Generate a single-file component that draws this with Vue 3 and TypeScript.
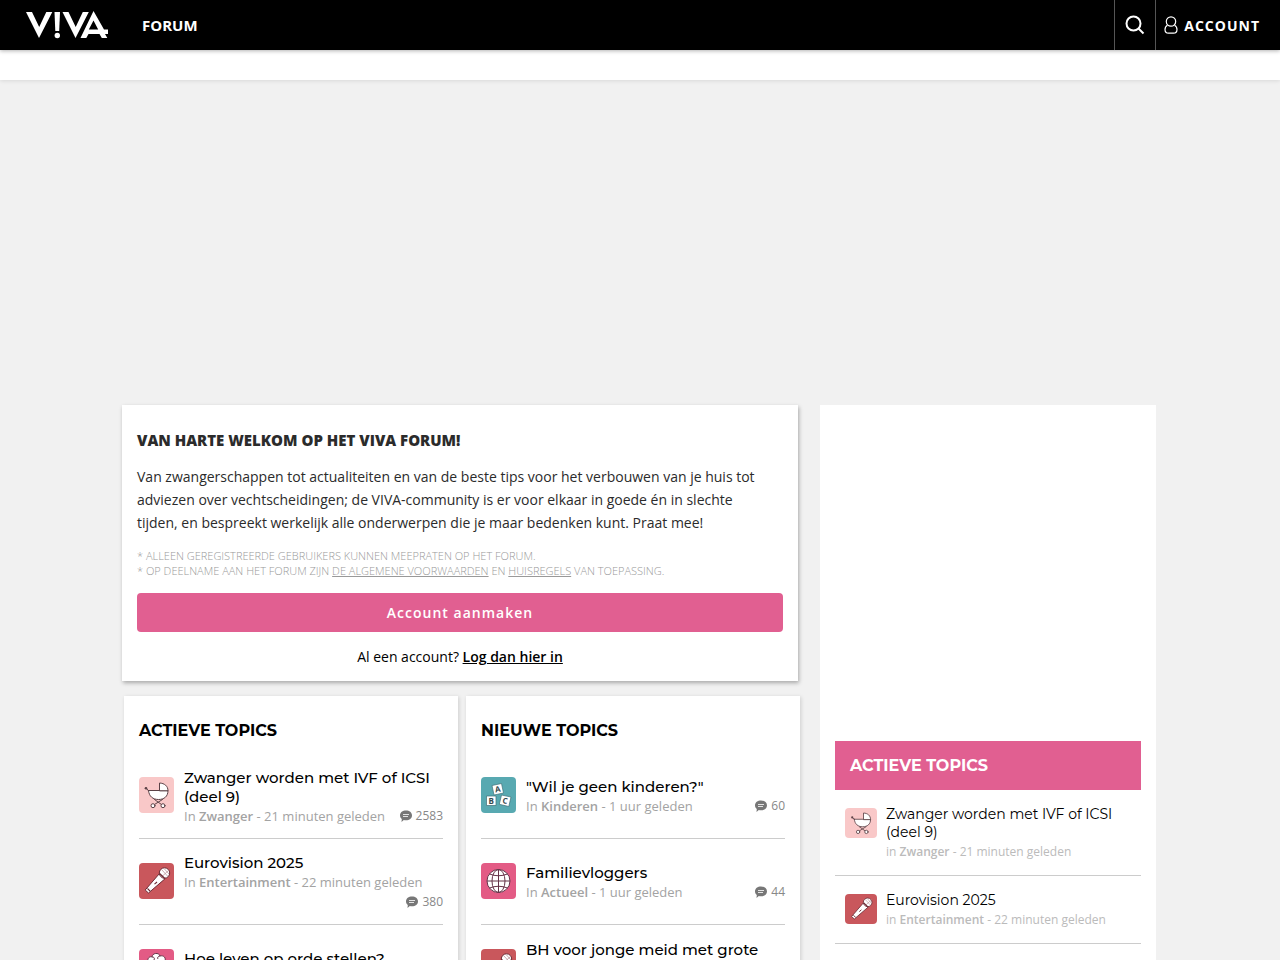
<script setup lang="ts">
import { defineComponent, h } from 'vue'

type IconName = 'pram' | 'mic' | 'blocks' | 'globe' | 'brain'

interface Topic {
  title: string
  forum: string
  time: string
  icon: IconName
  replies?: number
}

const artwork: Record<IconName, string> = {
  pram: `<g stroke="#5b4247" stroke-width="1" stroke-linecap="round" stroke-linejoin="round" fill="#fff"><path d="M9.500 13.500H29c0 6-3.900 9-9.500 9s-9.500-3-10-9z"/><path d="M20.500 13.500V6c5 .3 8.500 3 8.500 7.500z"/><path d="M9.500 13.500 7 11.300" fill="none"/><path d="m15.500 22.500 7 5m1-5-8 5" fill="none"/><circle cx="14" cy="28.700" r="2"/><circle cx="24" cy="28.700" r="2"/></g><circle cx="7" cy="11.300" r="1.300" fill="#5b4247"/>`,
  mic: `<g stroke="#6e2c36" stroke-width="1" stroke-linejoin="round"><path d="m20.500 10.500 5.500 5.300L9.500 30l-3.300-3z" fill="#fff"/><circle cx="25.500" cy="10" r="5.200" fill="#fff"/><path d="m22.500 6.500 6 6.500m-3.500-7.500 5 5.500M23 13.500l6.500-6" fill="none" stroke="#b58a91" stroke-width=".7"/><path d="m20.500 10.500 5.500 5.300" fill="none" stroke-width="1.500"/><path d="m8.500 25.500 2.600 2.600m4.400-7 2.500-2.100" fill="none" stroke-width="1.200"/></g>`,
  blocks: `<g fill="#fff" stroke="#3d7078" stroke-width=".7"><path d="m11 8.500 9.500-2 2 9.500-9.500 2z"/><path d="M5.500 19H15v9.500H5.500z"/><path d="m20.500 18 9.500 2-2.200 9.500-9.500-2.200z"/></g><g fill="#35484d" font-family="Open Sans, sans-serif" font-weight="700" font-size="8" text-anchor="middle"><text x="16.700" y="15" transform="rotate(-10 16.700 12)">A</text><text x="10.300" y="26.600">B</text><text x="24" y="26.600" transform="rotate(12 24 24)">C</text></g>`,
  globe: `<g fill="none" stroke="#653449" stroke-width="1"><circle cx="17.500" cy="18" r="11.500" fill="#fff"/><ellipse cx="17.500" cy="18" rx="6.500" ry="11.500"/><path d="M17.500 6.500v23M6 18h23M8.500 11q9 3.500 18 0M8.500 25q9-3.500 18 0"/></g>`,
  brain: `<path d="M7 21c-3-2-2-8 2-8-1-4 2-6 4-5 0-4 7-5 8-1 4-1 6 2 5 5 4 0 6 5 3 8 1 5-3 9-7 8-3 4-8 3-9 0-4 1-7-3-6-7z" fill="#fff" stroke="#653449"/><path d="M9 13c1-2 4-1 4 1m0-6c2 0 3 1 2 3m6-4c-2 0-3 2-2 3m7 2c-2-1-4 0-4 2m-11 4c2-3 5-1 5 1m4-2c3-1 5 1 4 3" fill="none" stroke="#653449"/>`,
}

const TopicIcon = defineComponent({
  props: { name: { type: String, required: true } },
  setup(props) {
    return () =>
      h('svg', {
        class: 'art',
        viewBox: '0 0 35 36',
        width: '100%',
        height: '100%',
        'aria-hidden': 'true',
        innerHTML: artwork[props.name as IconName],
      })
  },
})

const pram: Topic = { title: 'Zwanger worden met IVF of ICSI (deel 9)', forum: 'Zwanger', time: '21 minuten geleden', icon: 'pram', replies: 2583 }
const song: Topic = { title: 'Eurovision 2025', forum: 'Entertainment', time: '22 minuten geleden', icon: 'mic', replies: 380 }

const panels: { heading: string; topics: Topic[] }[] = [
  {
    heading: 'Actieve topics',
    topics: [pram, song, { title: 'Hoe leven op orde stellen?', forum: 'Psyche', time: '23 minuten geleden', icon: 'brain', replies: 12 }],
  },
  {
    heading: 'Nieuwe topics',
    topics: [
      { title: '"Wil je geen kinderen?"', forum: 'Kinderen', time: '1 uur geleden', icon: 'blocks', replies: 60 },
      { title: 'Familievloggers', forum: 'Actueel', time: '1 uur geleden', icon: 'globe', replies: 44 },
      { title: 'BH voor jonge meid met grote borsten', forum: 'Mode', time: '2 uur geleden', icon: 'mic', replies: 8 },
    ],
  },
]
const sidebarTopics: Topic[] = [pram, song]
</script>

<template>
  <div class="page">
    <header class="topbar">
      <a class="logo" href="#" aria-label="Viva">
        <svg viewBox="0 0 82 28" width="82" height="28" fill="#fff" aria-hidden="true">
          <path d="M0 1h6l7.200 15L20.300 1h6L13 27z" />
          <path d="M28.500 1h5.500l-.8 19h-3.900z" />
          <circle cx="31.300" cy="24.500" r="2.700" />
          <path d="M36.500 1h6l7.200 15L56.800 1h6L49.500 27z" />
          <path fill-rule="evenodd" d="M67.500 0 78 18.500h4V23h-3l2.300 4h-5.500l-2.300-4H62.500l-2.200 4H54.500zM67.500 9.500l-4.700 9h9.400z" />
        </svg>
      </a>
      <nav class="nav"><a href="#">FORUM</a></nav>
      <button class="search" type="button" aria-label="Zoeken">
        <svg viewBox="0 0 20 20" width="20" height="20" fill="none" stroke="#fff" stroke-width="2" aria-hidden="true">
          <circle cx="8.500" cy="8.500" r="7" />
          <path d="m13.500 13.500 5 5" />
        </svg>
      </button>
      <a class="account" href="#">
        <svg viewBox="0 0 14 18" width="14" height="18" fill="none" stroke="#fff" stroke-width="1.200" aria-hidden="true">
          <circle cx="7" cy="5.500" r="4.700" />
          <path d="M3.500 9.200C1.800 10 1 11.500 1 13.500c0 2.500 1.200 3.700 3.500 3.700h5c2.300 0 3.500-1.200 3.500-3.700 0-2-.8-3.500-2.500-4.300" />
        </svg>
        <span>ACCOUNT</span>
      </a>
    </header>
    <div class="subbar"></div>

    <div class="layout">
      <main class="main">
        <section class="welcome">
          <h1>VAN HARTE WELKOM OP HET VIVA FORUM!</h1>
          <p class="intro">
            Van zwangerschappen tot actualiteiten en van de beste tips voor het verbouwen van je huis tot adviezen over
            vechtscheidingen; de VIVA-community is er voor elkaar in goede én in slechte tijden, en bespreekt werkelijk
            alle onderwerpen die je maar bedenken kunt. Praat mee!
          </p>
          <p class="note">
            * ALLEEN GEREGISTREERDE GEBRUIKERS KUNNEN MEEPRATEN OP HET FORUM.<br />
            * OP DEELNAME AAN HET FORUM ZIJN <a href="#">DE ALGEMENE VOORWAARDEN</a> EN <a href="#">HUISREGELS</a> VAN
            TOEPASSING.
          </p>
          <button class="signup" type="button">Account aanmaken</button>
          <p class="login">Al een account? <a href="#">Log dan hier in</a></p>
        </section>

        <div class="panels">
          <section v-for="panel in panels" :key="panel.heading" class="panel">
            <h2>{{ panel.heading }}</h2>
            <ul>
              <li v-for="topic in panel.topics" :key="topic.title" class="topic">
                <span class="tile" :class="topic.icon"><TopicIcon :name="topic.icon" /></span>
                <div class="body">
                  <a class="title" href="#">{{ topic.title }}</a>
                  <div class="meta">
                    <span>In <b>{{ topic.forum }}</b> - {{ topic.time }}</span>
                    <span class="count">
                      <svg viewBox="0 0 12 12" width="12" height="12" aria-hidden="true">
                        <path d="M6 0.500c3.400 0 6 2 6 4.900s-2.600 4.900-6 4.900c-.8 0-1.500-.1-2.200-.3L1.500 12l.3-3C.7 8.100 0 6.900 0 5.400 0 2.500 2.600.5 6 .5z" fill="#777" />
                        <path d="M3 4.500h6M3 6.500h5" stroke="#fff" stroke-width=".8" />
                      </svg>
                      {{ topic.replies }}
                    </span>
                  </div>
                </div>
              </li>
            </ul>
          </section>
        </div>
      </main>

      <aside class="sidebar">
        <div class="slot"></div>
        <h2>Actieve topics</h2>
        <ul>
          <li v-for="topic in sidebarTopics" :key="topic.title" class="side-topic">
            <span class="tile small" :class="topic.icon"><TopicIcon :name="topic.icon" /></span>
            <div class="body">
              <a class="title" href="#">{{ topic.title }}</a>
              <div class="meta"><span>in <b>{{ topic.forum }}</b> - {{ topic.time }}</span></div>
            </div>
          </li>
        </ul>
      </aside>
    </div>
  </div>
</template>

<style>
body {
  margin: 0;
  background: #f1f1f1;
}
</style>

<style scoped>
.page {
  display: flex;
  flex-direction: column;
  min-height: 100vh;
  font-family: 'Open Sans', sans-serif;
  color: #000;
}
a {
  color: inherit;
}
h1,
h2,
p,
ul {
  margin: 0;
  padding: 0;
}
ul {
  list-style: none;
}
svg {
  display: block;
}
.topbar {
  position: relative;
  z-index: 1;
  flex: none;
  display: flex;
  align-items: center;
  height: 50px;
  background: #000;
  color: #fff;
  box-shadow: 0 1px 4px rgba(0, 0, 0, 0.3);
}
.logo {
  margin-left: 26px;
}
.nav {
  flex: 1;
  margin-left: 34px;
  font-size: 15px;
  font-weight: 700;
}
.nav a,
.account {
  text-decoration: none;
}
.search {
  display: flex;
  align-items: center;
  justify-content: center;
  width: 42px;
  height: 50px;
  padding: 0;
  background: none;
  border: solid #555;
  border-width: 0 1px;
}
.account {
  display: flex;
  align-items: center;
  gap: 6px;
  padding: 0 20px 0 8px;
  font-size: 14px;
  font-weight: 700;
  letter-spacing: 1px;
}
.subbar {
  flex: none;
  height: 30px;
  background: #fff;
  box-shadow: 0 1px 4px rgba(0, 0, 0, 0.1);
}
.layout {
  flex: 1;
  display: grid;
  grid-template-columns: minmax(0, 1fr) 336px;
  gap: 20px;
  width: 100%;
  max-width: 1036px;
  margin: 325px auto 0;
  padding-right: 2px;
  box-sizing: border-box;
}
.welcome {
  margin-right: 2px;
  padding: 24px 15px 14px;
  background: #fff;
  box-shadow: 1px 2px 4px rgba(0, 0, 0, 0.3);
}
.welcome h1 {
  font-size: 15px;
  line-height: 22px;
  font-weight: 800;
  color: #2b2b2b;
}
.intro {
  margin-top: 14px;
  padding-right: 10px;
  font-size: 14px;
  line-height: 23px;
  color: #2b2b2b;
}
.note {
  margin-top: 14px;
  font-size: 11px;
  line-height: 15px;
  font-weight: 300;
  color: #999;
}
.signup {
  display: block;
  width: 100%;
  height: 39px;
  margin-top: 15px;
  padding: 0;
  border: 0;
  border-radius: 4px;
  background: #e15f91;
  color: #fff;
  font: 600 14px 'Open Sans', sans-serif;
  letter-spacing: 1px;
}
.login {
  margin-top: 15px;
  font-size: 14px;
  line-height: 20px;
  text-align: center;
}
.login a {
  font-weight: 600;
}
.panels {
  display: grid;
  grid-template-columns: 1fr 1fr;
  gap: 8px;
  margin: 15px 0 0 2px;
}
.panel {
  padding: 24px 15px;
  background: #fff;
  box-shadow: 1px 1px 4px rgba(0, 0, 0, 0.15);
}
.panel h2,
.sidebar h2 {
  font-family: Montserrat, 'Open Sans', sans-serif;
  font-size: 16px;
  line-height: 21px;
  font-weight: 700;
  text-transform: uppercase;
}
.panel ul {
  margin-top: 12px;
}
.topic {
  display: flex;
  align-items: center;
  gap: 10px;
  min-height: 86px;
  padding: 14px 0 12px;
  border-bottom: 1px solid #ccc;
  box-sizing: border-box;
}
.tile {
  flex: none;
  width: 35px;
  height: 36px;
  margin-bottom: 4px;
  border-radius: 4px;
  overflow: hidden;
}
.tile.small {
  width: 32px;
  height: 30px;
  margin: 3px 0 0;
}
.pram {
  background: #f9c8c8;
}
.mic {
  background: #c9575c;
}
.blocks {
  background: #58a9b1;
}
.globe,
.brain {
  background: #e35b85;
}
.body {
  flex: 1;
  min-width: 0;
}
.title {
  display: block;
  font-family: Montserrat, 'Open Sans', sans-serif;
  font-size: 15px;
  line-height: 19px;
  font-weight: 500;
  text-decoration: none;
}
.meta {
  display: flex;
  flex-wrap: wrap;
  align-items: center;
  font-size: 13px;
  line-height: 20px;
  color: #a3a3a3;
}
.meta b {
  font-weight: 600;
}
.count {
  display: flex;
  align-items: center;
  gap: 4px;
  margin-left: auto;
  font-size: 12px;
  color: #888;
}
.sidebar {
  padding: 0 15px;
  background: #fff;
}
.slot {
  height: 336px;
}
.sidebar h2 {
  padding: 14px 15px;
  background: #e15f91;
  color: #fff;
}
.side-topic {
  display: flex;
  align-items: flex-start;
  gap: 9px;
  padding: 15px 10px 13px;
  border-bottom: 1px solid #ccc;
}
.side-topic .title {
  font-size: 14px;
  line-height: 18px;
  font-weight: 400;
}
.side-topic .meta {
  font-size: 12px;
  line-height: 21px;
  color: #bbb;
}
</style>
